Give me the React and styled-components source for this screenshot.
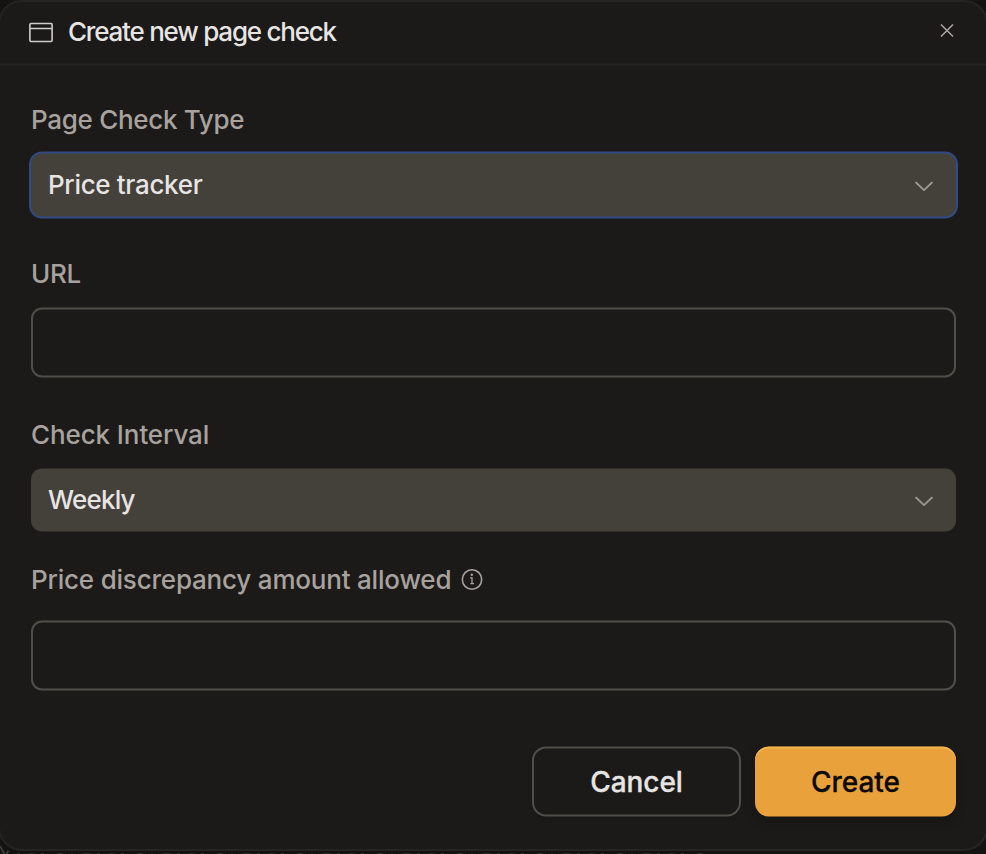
import React from "react";
import styled, { createGlobalStyle, css } from "styled-components";

const GlobalStyle = createGlobalStyle`
  * { box-sizing: border-box; }
  html, body { margin: 0; height: 854px; overflow: hidden; background: #141312; }
  body, button, input { font-family: Inter, "Liberation Sans", sans-serif; }
`;

const Page = styled.div`
  position: relative;
  width: 986px;
  height: 854px;
  overflow: hidden;
`;

const Dialog = styled.section`
  width: 990px;
  height: 851px;
  margin-left: -2px;
  display: flex;
  flex-direction: column;
  background: #1b1a18;
  border: 2px solid #252422;
  border-radius: 24px;
`;

const Header = styled.header`
  height: 64px;
  flex: none;
  display: flex;
  align-items: center;
  padding: 0 32px 0 29px;
  border-bottom: 2px solid #252422;
  transform: translateY(-0.5px);
`;

const Title = styled.h1`
  flex: 1;
  margin: -2px 0 0 15px;
  font-size: 26px;
  font-weight: 500;
  line-height: 32px;
  letter-spacing: -1.22px;
  color: #e7e5e4;
`;

const CloseButton = styled.button`
  display: flex;
  margin-top: -5px;
  padding: 0;
  border: 0;
  background: none;
  color: #a8a29e;
`;

const Form = styled.form`
  display: flex;
  flex-direction: column;
  padding: 0 30px 0 31px;
  transform: translateY(-0.5px);
`;

const Label = styled.label`
  display: flex;
  align-items: center;
  height: 32px;
  margin-top: ${(p) => p.$top}px;
  margin-bottom: ${(p) => p.$bottom}px;
  font-size: 26px;
  font-weight: 500;
  letter-spacing: ${(p) => p.$spacing}px;
  color: #a8a29e;
  white-space: nowrap;

  svg { margin: 1px 0 0 10px; }
`;

const Select = styled.button`
  display: flex;
  align-items: center;
  justify-content: space-between;
  height: 63px;
  padding: 0 23px 2px 17px;
  border: 0;
  border-radius: 11px;
  background: #44403a;
  color: #e7e5e4;
  font-size: 26px;
  font-weight: 500;
  letter-spacing: ${(p) => p.$spacing}px;
  ${(p) => p.$focused && css`box-shadow: 0 0 0 2px #304b87;`}

  svg { color: #9c9791; margin-top: 4px; }
`;

const TextInput = styled.input`
  height: 70px;
  width: 100%;
  padding: 0 18px;
  border: 2px solid #504e48;
  border-radius: 11px;
  background: transparent;
  color: #e7e5e4;
  font-size: 26px;
  outline: none;
`;

const Actions = styled.footer`
  display: flex;
  justify-content: flex-end;
  gap: 14px;
  margin-top: 56px;
`;

const Button = styled.button`
  width: ${(p) => (p.$primary ? 201 : 209)}px;
  height: 70px;
  padding: 0;
  border: ${(p) => (p.$primary ? "0" : "2px solid #504e48")};
  border-radius: 14px;
  background: ${(p) => (p.$primary ? "#e9a23b" : "transparent")};
  box-shadow: ${(p) =>
    p.$primary
      ? "inset 0 2px 0 #f0b54f, 0 4px 12px rgba(0, 0, 0, 0.2)"
      : "0 2px 4px rgba(0, 0, 0, 0.12)"};
  color: ${(p) => (p.$primary ? "#0c0a09" : "#e7e5e4")};
  font-size: 28px;
  font-weight: 500;
  letter-spacing: -0.05px;
  -webkit-text-stroke: 0.3px currentColor;
`;

const Backdrop = styled.svg`
  position: absolute;
  left: 0;
  bottom: 0;
`;

const WindowIcon = () => (
  <svg width="24" height="20" viewBox="0 0 24 20" fill="none" stroke="#d0cecb" strokeWidth="1.6">
    <rect x="0.9" y="0.9" width="22.2" height="18.2" rx="1.3" />
    <path d="M1 6h22" />
  </svg>
);

const CloseIcon = () => (
  <svg width="14" height="14" viewBox="0 0 14 14" fill="none" stroke="currentColor" strokeWidth="1.6">
    <path d="M1 1l12 12M13 1L1 13" />
  </svg>
);

const Chevron = () => (
  <svg width="18" height="10" viewBox="0 0 18 10" fill="none" stroke="currentColor" strokeWidth="1.8" strokeLinecap="round" strokeLinejoin="round">
    <path d="M1 1l8 7.7L17 1" />
  </svg>
);

const InfoIcon = () => (
  <svg width="22" height="22" viewBox="0 0 22 22" fill="none" stroke="currentColor" strokeWidth="1.6">
    <circle cx="11" cy="11" r="9.7" />
    <path d="M9 9.4h2v5.6M9.4 15.2h3.6" strokeWidth="1.3" />
    <circle cx="10.8" cy="6.3" r="1.2" fill="currentColor" stroke="none" />
  </svg>
);

// Top edges of the page content that show below the dialog.
const BackdropContent = () => (
  <Backdrop width="720" height="10" viewBox="0 0 720 10" fill="none" aria-hidden="true">
    <path d="M0 2l4.5 8M8.500 6.500L6.500 10" stroke="#3d3b39" strokeWidth="2" />
    <path
      d="M17 9.500H710"
      stroke="#302e2d"
      strokeWidth="1"
      strokeDasharray="3 9 5 7 3 13 6 8 2 10 8 6"
    />
  </Backdrop>
);

export default function App() {
  return (
    <>
      <GlobalStyle />
      <Page>
        <Dialog role="dialog" aria-labelledby="title">
          <Header>
            <WindowIcon />
            <Title id="title">Create new page check</Title>
            <CloseButton aria-label="Close"><CloseIcon /></CloseButton>
          </Header>
          <Form onSubmit={(e) => e.preventDefault()}>
            <Label $top={37} $bottom={19} $spacing={-0.3}>Page Check Type</Label>
            <Select type="button" $focused $spacing={-0.33}>Price tracker<Chevron /></Select>
            <Label $top={40} $bottom={19} $spacing={-0.3} htmlFor="url">URL</Label>
            <TextInput id="url" />
            <Label $top={40} $bottom={19} $spacing={-0.1}>Check Interval</Label>
            <Select type="button" $spacing={-0.8}>Weekly<Chevron /></Select>
            <Label $top={31} $bottom={26} $spacing={-0.2} htmlFor="amount">
              Price discrepancy amount allowed<InfoIcon />
            </Label>
            <TextInput id="amount" />
            <Actions>
              <Button type="button">Cancel</Button>
              <Button type="submit" $primary>Create</Button>
            </Actions>
          </Form>
        </Dialog>
        <BackdropContent />
      </Page>
    </>
  );
}
